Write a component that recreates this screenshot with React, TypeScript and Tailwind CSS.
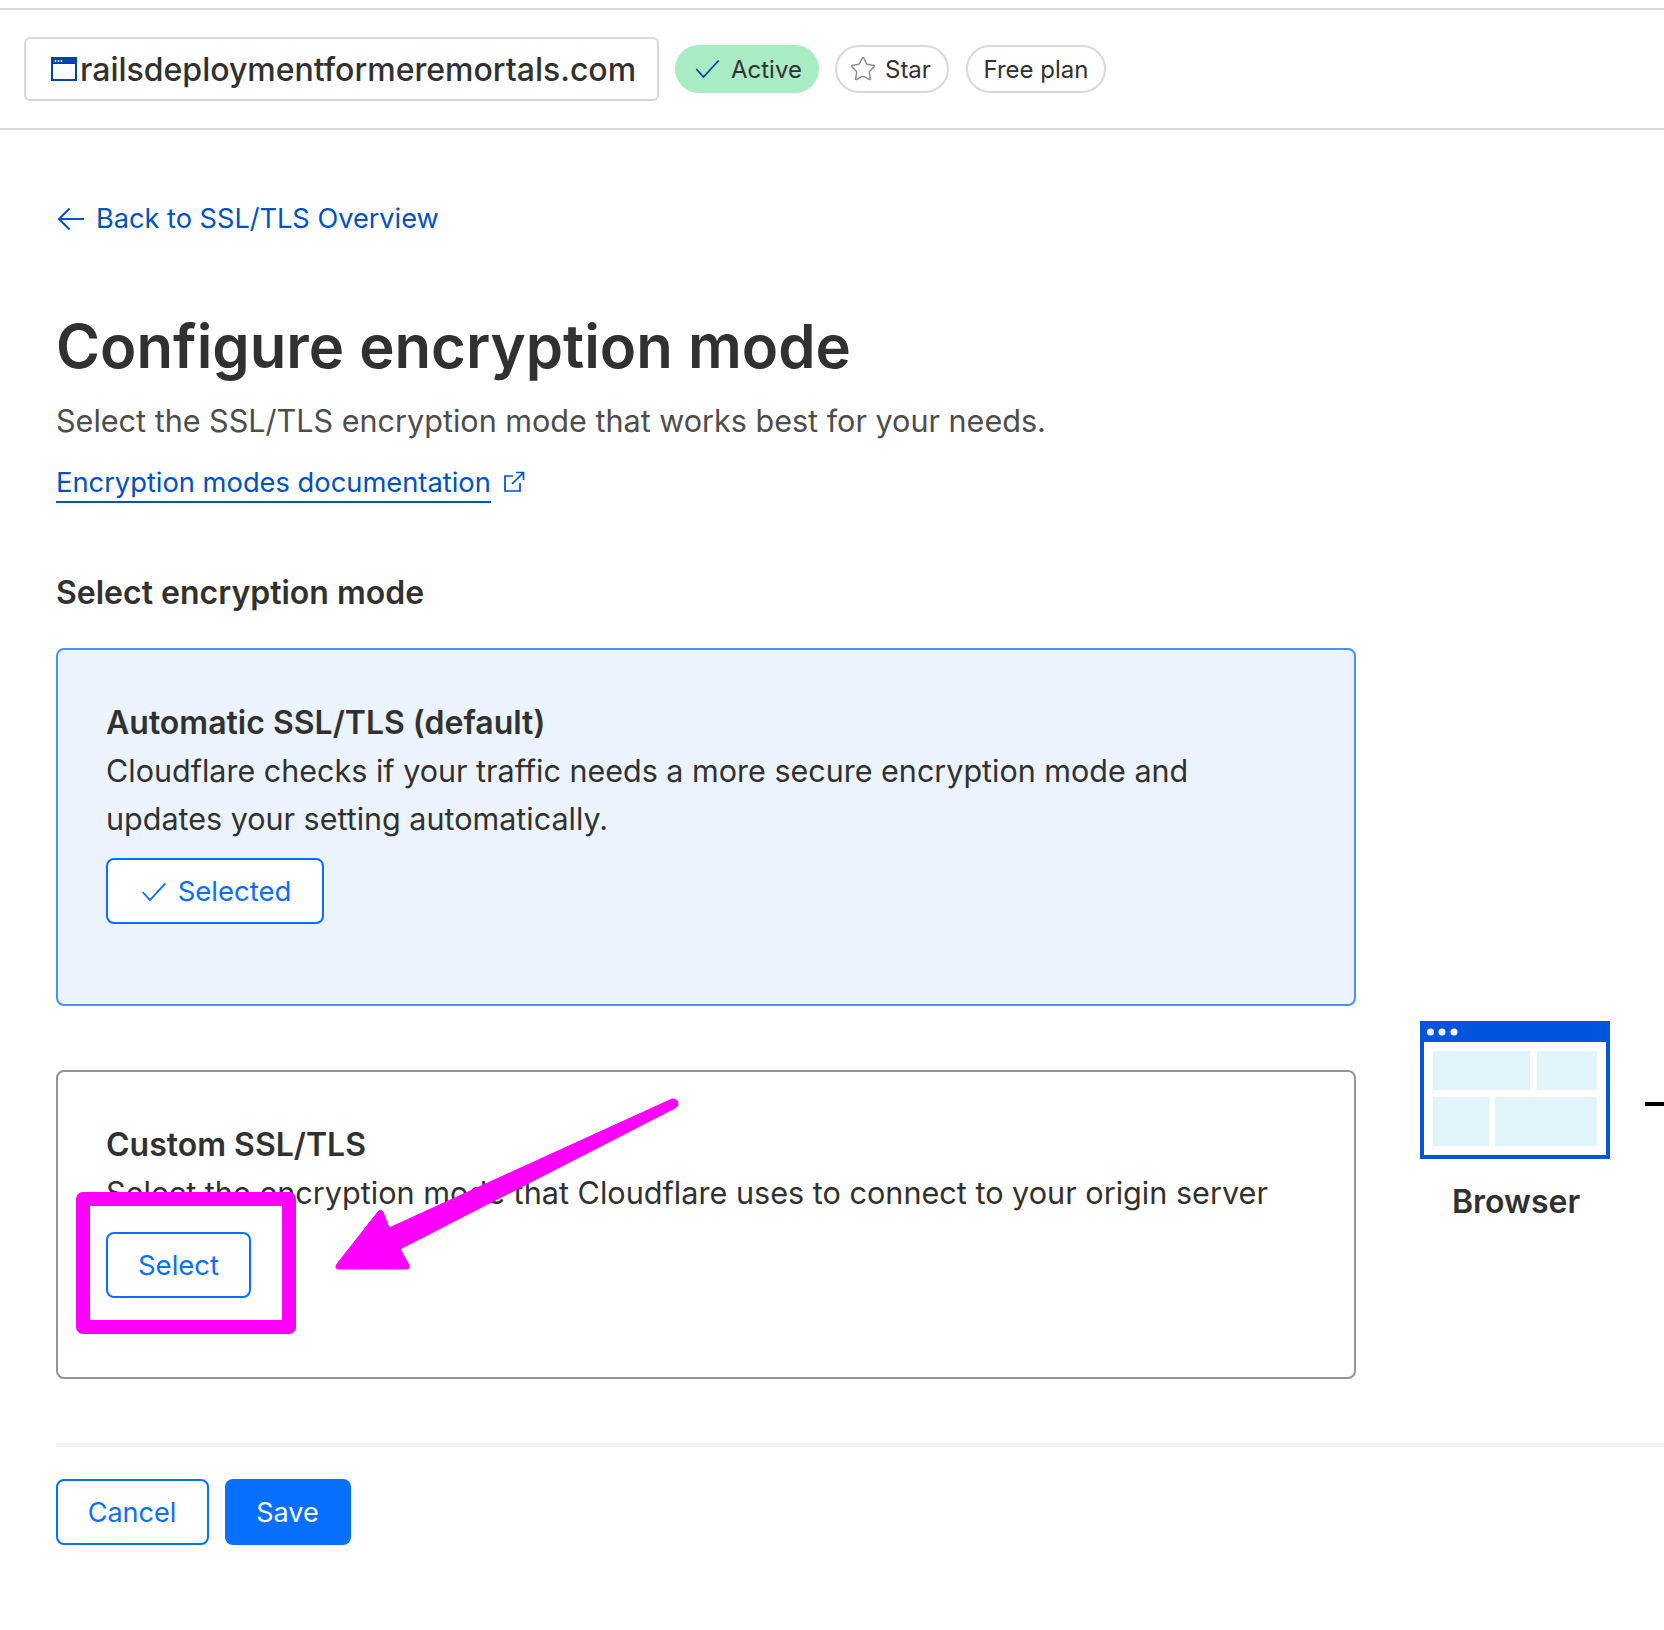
import { Star } from "lucide-react";

function Check({ className }: { className: string }) {
	return (
		<svg viewBox="0 0 28 22" fill="none" stroke="currentColor" strokeWidth="2" className={className}>
			<path d="M1.5 11 L9.5 20 L26.5 1.5" />
		</svg>
	);
}

function WindowIcon() {
	return (
		<svg viewBox="0 0 26 24" className="w-[26px] h-[24px] shrink-0 mr-[3px]">
			<rect x="1" y="1" width="24" height="22" fill="#fff" stroke="#0045a6" strokeWidth="2" />
			<rect x="1" y="1" width="24" height="6" fill="#0045a6" />
			<circle cx="4.5" cy="4" r="0.9" fill="#fff" />
			<circle cx="7.5" cy="4" r="0.9" fill="#fff" />
			<circle cx="10.5" cy="4" r="0.9" fill="#fff" />
		</svg>
	);
}

function BrowserIllustration() {
	return (
		<div className="relative w-[244px] mt-[373px] shrink-0">
			<svg viewBox="0 0 244 138" className="w-[244px] h-[138px] block">
				<rect x="2" y="2" width="186" height="134" fill="#fff" stroke="#0055dc" strokeWidth="4" />
				<rect x="0" y="0" width="190" height="21" fill="#0055dc" />
				<circle cx="10.5" cy="11" r="3.5" fill="#fff" />
				<circle cx="22" cy="11" r="3.5" fill="#fff" />
				<circle cx="34" cy="11" r="3.5" fill="#fff" />
				<rect x="13" y="30" width="97" height="39" fill="#e1f4fa" />
				<rect x="117" y="30" width="60" height="39" fill="#e1f4fa" />
				<rect x="13" y="76" width="56" height="49" fill="#e1f4fa" />
				<rect x="75" y="76" width="102" height="49" fill="#e1f4fa" />
				<rect x="225" y="81" width="19" height="4" fill="#000" />
			</svg>
			<div className="w-[192px] mt-[19px] text-center text-[32px] leading-[48px] font-semibold text-[#313131]">
				Browser
			</div>
		</div>
	);
}

export default function App() {
	return (
		<div className="relative w-[1664px] h-[1630px] overflow-hidden bg-white font-['Inter',sans-serif] text-[#313131]">
			<div className="pt-2">
				<div className="h-[122px] border-y-2 border-[#dcdcdc] flex items-center pl-6 pb-px">
					<div className="h-[64px] w-[635px] border-2 border-[#d9d9d9] rounded-[6px] flex items-center pl-[25px]">
						<WindowIcon />
						<span className="pt-[2px] text-[32px] font-medium text-[#313131]">railsdeploymentformeremortals.com</span>
					</div>
					<div className="ml-4 h-[48px] w-[144px] rounded-full bg-[#a9ebc2] flex items-center pl-5 gap-[11px] text-[24px] text-[#313131]">
						<Check className="w-[25px] h-[20px] text-[#0045a6]" />
						<span className="pt-[2px]">Active</span>
					</div>
					<div className="ml-4 h-[48px] w-[114px] rounded-full border-2 border-[#d9d9d9] flex items-center pl-3 gap-2 text-[24px] text-[#313131]">
						<Star className="w-[28px] h-[28px] text-[#8c8c8c]" strokeWidth={1.2} />
						<span className="pt-[2px]">Star</span>
					</div>
					<div className="ml-[17px] h-[48px] w-[140px] rounded-full border-2 border-[#d9d9d9] flex items-center justify-center text-[24px] text-[#313131]">
						<span className="pt-[2px]">Free plan</span>
					</div>
				</div>
			</div>

			<div className="pl-14">
				<a className="mt-[69px] h-[40px] flex items-center gap-[11px] text-[27.15px] text-[#0051c3]">
					<svg viewBox="0 0 28 24" fill="none" stroke="currentColor" strokeWidth="2" className="w-[28px] h-[24px] ml-px">
						<path d="M27 12 H2 M12.5 1.5 L2 12 L12.5 22.5" />
					</svg>
					Back to SSL/TLS Overview
				</a>

				<h1 className="mt-[67px] text-[59.8px] leading-[80px] font-semibold text-[#313131]">Configure encryption mode</h1>
				<p className="mt-[11px] text-[30.56px] leading-[48px] text-[#4d4d4d]">
					Select the SSL/TLS encryption mode that works best for your needs.
				</p>
				<div className="mt-5 flex items-center gap-[12px] text-[#0051c3]">
					<a className="text-[27.3px] leading-[36px] border-b-2 border-[#0051c3] pb-0">Encryption modes documentation</a>
					<svg viewBox="0 0 22 22" fill="none" stroke="currentColor" strokeWidth="1.7" className="w-[22px] h-[22px] mb-1">
						<path d="M17 12 V20 H2 V5 H10 M9 13 L20.5 1.5 M13 1.5 H20.5 V9" />
					</svg>
				</div>

				<h2 className="mt-[66px] text-[32px] leading-[48px] font-semibold text-[#313131]">Select encryption mode</h2>

				<div className="mt-[31px] flex">
					<div className="w-[1300px] shrink-0">
						<div className="h-[358px] rounded-[8px] border-2 border-[#4a90ff] bg-[#ebf3ff] pl-12 pt-[49px]">
							<div className="text-[32px] leading-[48px] font-semibold">Automatic SSL/TLS (default)</div>
							<div className="text-[30.5px] leading-[48px] w-[1150px]">
								Cloudflare checks if your traffic needs a more secure encryption mode and updates your setting automatically.
							</div>
							<button className="mt-[15px] h-[66px] w-[218px] rounded-[8px] border-2 border-[#086fff] bg-white flex items-center justify-center gap-[11px] pl-[2px] pt-[2px] text-[27.5px] text-[#086fff]">
								<Check className="w-[26px] h-[20px]" />
								Selected
							</button>
						</div>

						<div className="mt-[64px] h-[309px] rounded-[8px] border-2 border-[#949494] bg-white pl-12 pt-[49px]">
							<div className="text-[32px] leading-[48px] font-semibold">Custom SSL/TLS</div>
							<div className="text-[30.62px] leading-[48px] whitespace-nowrap">
								Select the encryption mode that Cloudflare uses to connect to your origin server
							</div>
							<button className="mt-[15px] h-[66px] w-[145px] rounded-[8px] border-2 border-[#086fff] bg-white pt-[2px] text-[27.5px] text-[#086fff]">
								Select
							</button>
						</div>
					</div>
					<div className="ml-[64px]">
						<BrowserIllustration />
					</div>
				</div>

				<div className="mt-[64px] h-1 bg-[#f2f2f2]" />

				<div className="mt-8 flex gap-4">
					<button className="h-[66px] w-[153px] rounded-[8px] border-2 border-[#086fff] bg-white pt-[2px] pr-px text-[27px] text-[#086fff]">Cancel</button>
					<button className="h-[66px] w-[126px] rounded-[8px] bg-[#086fff] pt-[2px] pr-px text-[27px] text-white">Save</button>
				</div>
			</div>

			{/* annotation drawn over the page */}
			<svg viewBox="0 0 1664 1630" className="absolute inset-0 w-[1664px] h-[1630px] pointer-events-none">
				<rect x="83" y="1199" width="206" height="128" fill="none" stroke="#ff00ff" strokeWidth="14" strokeLinejoin="round" />
				<path d="M672 1099 Q678 1099 678 1104 Q678 1106 675 1108 L400 1249 L409 1265 Q410 1269 406 1269 L339 1269 Q334 1269 337 1264 L377 1213 Q381 1208 383 1212 L389 1228 Z" fill="#ff00ff" stroke="#ff00ff" strokeWidth="1" strokeLinejoin="round" />
			</svg>
		</div>
	);
}
